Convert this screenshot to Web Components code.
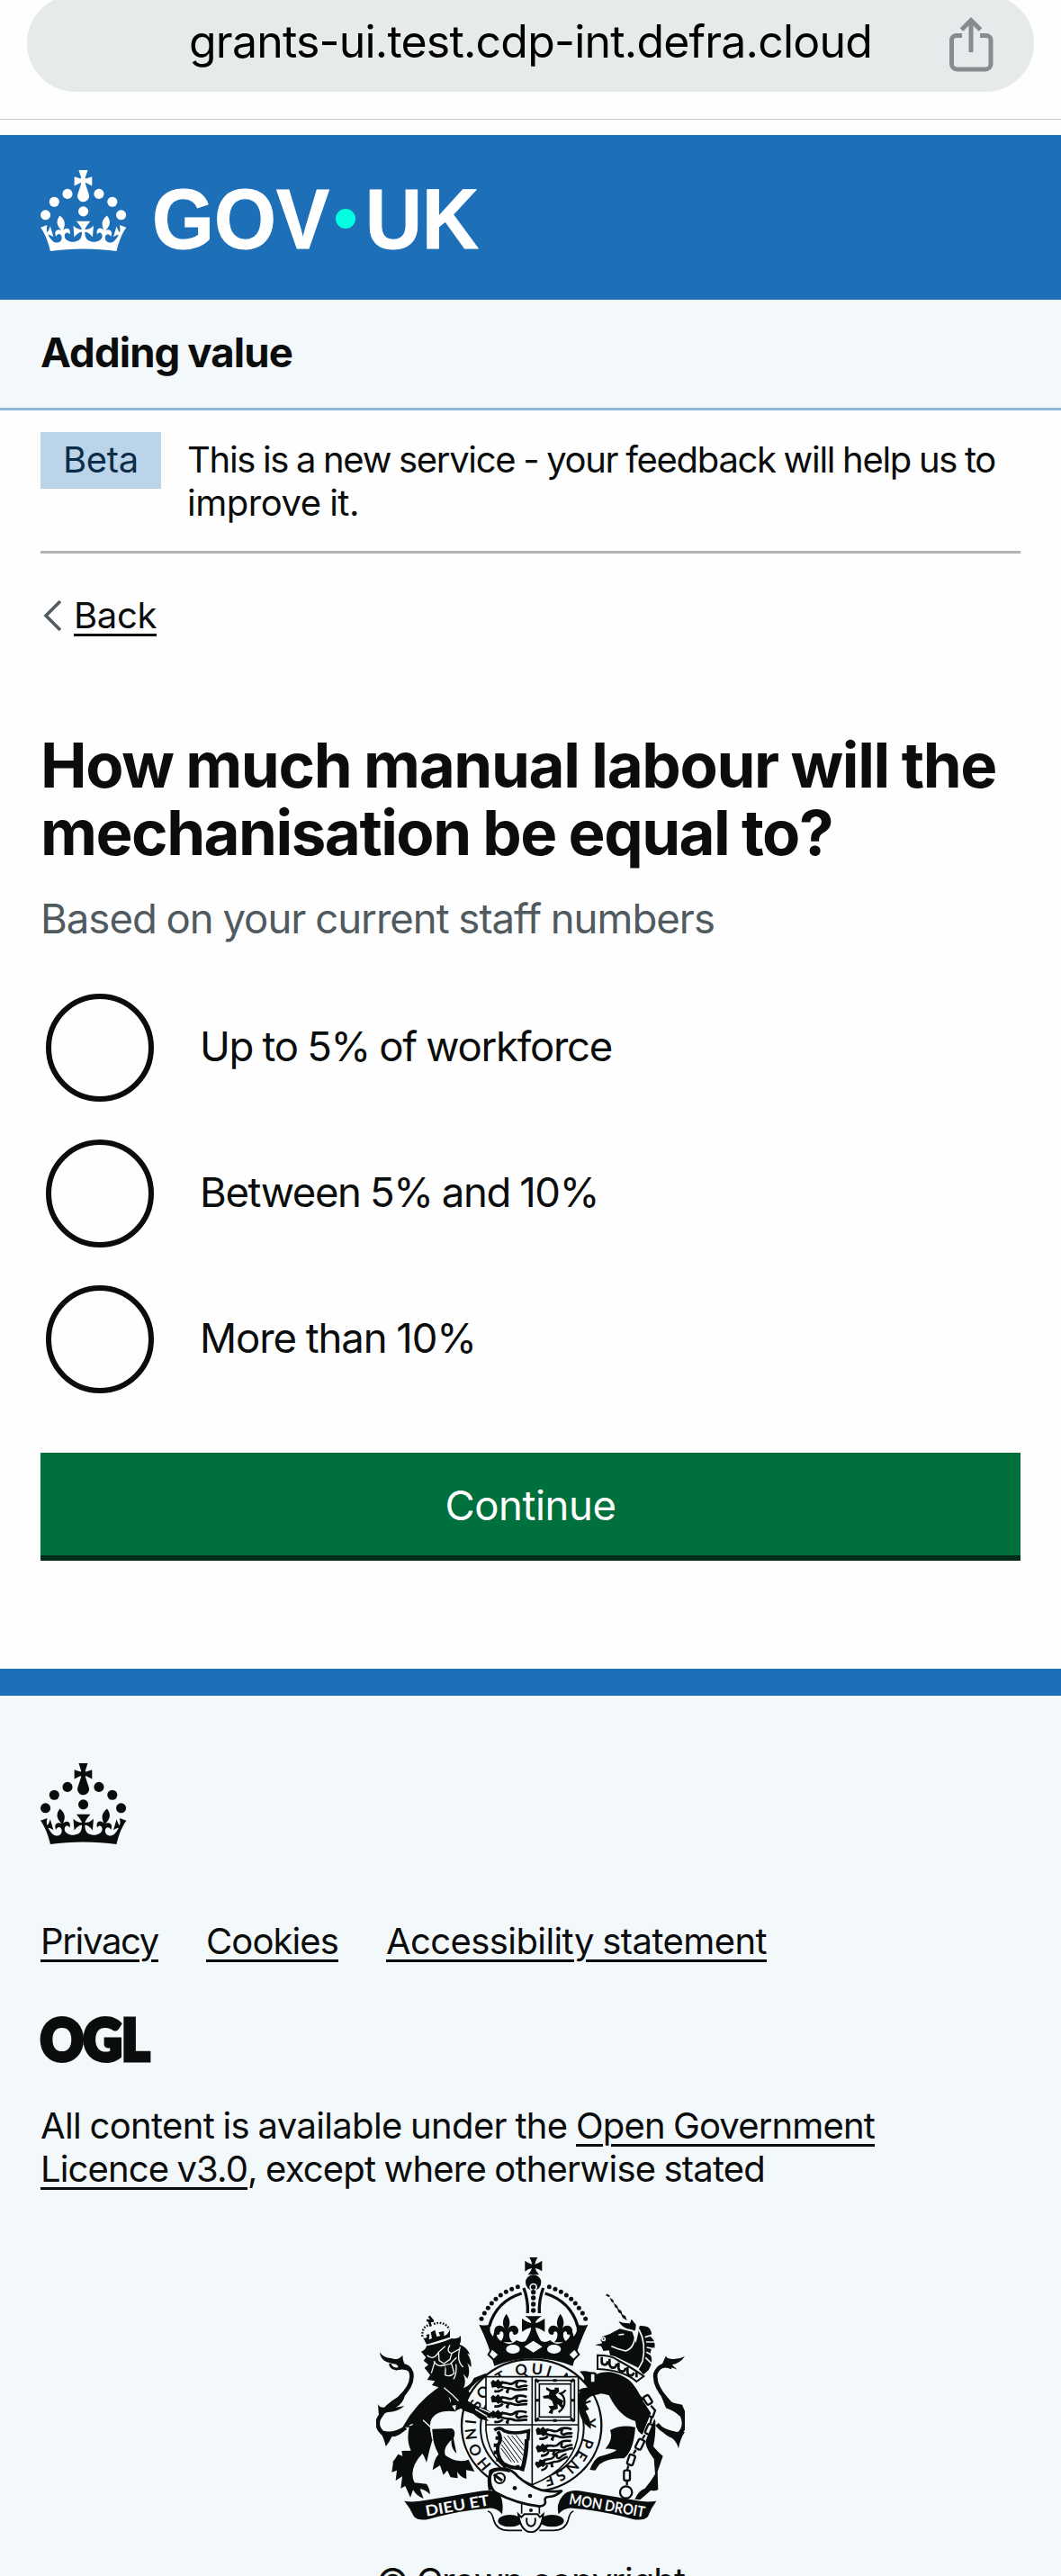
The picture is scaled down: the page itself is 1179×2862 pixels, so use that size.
<!DOCTYPE html>
<html lang="en">
<head>
<meta charset="utf-8">
<meta name="viewport" content="width=device-width, initial-scale=1">
<title>How much manual labour will the mechanisation be equal to?</title>
<style>
html,body{margin:0;padding:0;background:#fefefe}
body{height:2862px;overflow:hidden;font-family:Inter,"Liberation Sans",sans-serif;color:#0b0c0c;word-spacing:-.07em}
</style>
</head>
<body>
<grant-page></grant-page>

<template id="crown">
<svg viewBox="0 0 64 60" width="96" height="90" fill="currentColor"><circle cx="20" cy="17.6" r="3.7"/><circle cx="10.2" cy="23.5" r="3.7"/><circle cx="3.7" cy="33.2" r="3.7"/><circle cx="31.7" cy="30.6" r="3.7"/><circle cx="43.3" cy="17.6" r="3.7"/><circle cx="53.2" cy="23.5" r="3.7"/><circle cx="59.7" cy="33.2" r="3.7"/><path d="M33.1,9.8c.2-.1.3-.3.5-.5l4.6,2.4v-6.8l-4.6,1.5c-.1-.2-.3-.3-.5-.5l1.9-5.9h-6.7l1.9,5.9c-.2.1-.3.3-.5.5l-4.6-1.5v6.8l4.6-2.4c.1.2.3.3.5.5l-2.6,8c-.9,2.8,1.2,5.7,4.1,5.7h0c3,0,5.1-2.9,4.1-5.7l-2.6-8ZM37,37.9s-3.4,3.8-4.1,6.1c2.2,0,4.2-.5,6.4-2.8l-.7,8.5c-2-2.8-4.4-4.1-5.7-3.8.1,3.1.5,6.7,5.8,7.2,3.7.3,6.7-1.5,7-3.8.4-2.6-2-4.3-3.7-1.6-1.4-4.5,2.4-6.1,4.9-3.2-1.9-4.5-1.8-7.7,2.4-10.9,3,4,2.6,7.3-1.2,11.1,2.4-1.3,6.2,0,4,4.6-1.2-2.8-3.7-2.2-4.2.2-.3,1.7.7,3.7,3,4.2,1.9.3,4.7-.9,7-5.9-1.3,0-2.4.7-3.9,1.7l2.4-8c.6,2.3,1.4,3.7,2.2,4.5.6-1.6.5-2.8,0-5.3l5,1.8c-2.6,3.6-5.2,8.7-7.3,17.5-7.4-1.1-15.7-1.7-24.5-1.7h0c-8.8,0-17.1.6-24.5,1.7-2.1-8.9-4.7-13.9-7.3-17.5l5-1.8c-.5,2.5-.6,3.7,0,5.3.8-.8,1.6-2.3,2.2-4.5l2.4,8c-1.5-1-2.6-1.7-3.9-1.7,2.3,5,5.2,6.2,7,5.9,2.3-.4,3.3-2.4,3-4.2-.5-2.4-3-3.1-4.2-.2-2.2-4.6,1.6-6,4-4.6-3.7-3.7-4.2-7.1-1.2-11.1,4.2,3.2,4.3,6.4,2.4,10.9,2.5-2.8,6.3-1.3,4.9,3.2-1.8-2.7-4.1-1-3.7,1.6.3,2.3,3.3,4.1,7,3.8,5.4-.5,5.7-4.2,5.8-7.2-1.3-.2-3.7,1-5.7,3.8l-.7-8.5c2.2,2.3,4.2,2.7,6.4,2.8-.7-2.3-4.1-6.1-4.1-6.1h10.6,0Z"/></svg>
</template>

<template id="arms">
<svg viewBox="54 54 1029 918" width="343" height="306" fill="#0b0c0c" stroke="none">
<defs>
<path id="fleur" d="M0-45C-14-25-14-10-5 6C-12-8-34-12-40 8C-42 22-30 30-22 22C-24 14-14 10-10 20C-8 34-14 42-20 50H20C14 42 8 34 10 20C14 10 24 14 22 22C30 30 42 22 40 8C34-12 12-8 5 6C14-10 14-25 0-45Z"/>
<path id="pattee" d="M-28-30H28Q8-18 7-7Q18-9 38-22V22Q18 9 7 8Q8 25 30 60H-30Q-8 25-7 8Q-18 9-38 22V-22Q-18-9-7-7Q-8-18-28-30Z"/>
<g id="passant"><path d="M2-12L10-20 18-14 26-22 34-14 44-17 40-4 36 6 26 10 20 4 6 6Z"/><path d="M36-8C50-18 62 0 76-8C86-18 100-20 122-13M36 2C52 10 62 6 74 10C90 20 110 8 124 12M42 10C34 20 24 20 14 18M64 8C56 20 50 20 62 22M92-12C80 0 92 8 102 2C114 0 120-2 124 2" fill="none" stroke="#0b0c0c" stroke-width="8" stroke-linejoin="round"/></g>
<path id="garter" d="M440 745A181 174 0 0 1 444 494A181 174 0 0 1 700 494A181 174 0 0 1 610 784"/>
</defs>
<!-- royal crown -->
<path d="M565 54H592Q584 68 583 77Q593 75 607 65V100Q593 91 584 90Q586 100 597 112H560Q571 100 573 90Q563 91 550 101V65Q563 75 574 77Q573 68 565 54Z"/>
<circle cx="578" cy="138" r="26"/>
<circle cx="578" cy="153" r="13" fill="#f3f8fa"/>
<g id="beads"><circle cx="526" cy="152" r="7.5"/><circle cx="506" cy="160" r="7.5"/><circle cx="487" cy="169" r="7.5"/><circle cx="469" cy="180" r="7.5"/><circle cx="453" cy="193" r="7.5"/><circle cx="439" cy="207" r="7.5"/><circle cx="427" cy="223" r="7.5"/><circle cx="415" cy="240" r="7.5"/><circle cx="405" cy="259" r="7.5"/></g>
<use href="#beads" transform="translate(1157 0) scale(-1 1)"/>
<g fill="none" stroke="#0b0c0c" stroke-width="10"><path d="M539 174Q455 200 431 283M617 174Q702 200 726 283"/><path d="M546 156Q561 195 559 240M611 156Q596 195 598 240"/></g>
<circle cx="578" cy="153" r="8"/><circle cx="578" cy="170" r="8"/><circle cx="578" cy="189" r="8"/><circle cx="578" cy="210" r="8"/><circle cx="578" cy="231" r="8"/>
<use href="#pattee" x="578" y="280"/><use href="#fleur" x="488" y="287"/><use href="#fleur" x="668" y="287"/>
<path d="M397 278Q418 284 438 276Q426 300 444 318Q446 300 456 292Q450 328 478 336Q500 350 522 330Q545 344 562 326H594Q612 344 634 330Q656 350 678 336Q706 328 700 292Q710 300 712 318Q730 300 718 276Q738 284 760 278Q728 345 709 416Q578 366 448 416Q430 345 397 278Z"/>
<g fill="#f3f8fa"><ellipse cx="510" cy="360" rx="23" ry="15"/><ellipse cx="647" cy="360" rx="23" ry="15"/><path d="M578 332L608 352 578 371 548 352Z"/><path d="M440 358L464 378 446 396 428 378Z" stroke="#0b0c0c" stroke-width="6"/><path d="M716 358L730 378 712 396 694 378Z" stroke="#0b0c0c" stroke-width="6"/></g>

<!-- lion supporter -->
<path d="M204 368Q220 362 222 349Q270 340 306 324Q330 328 334 314Q340 330 332 344Q356 352 367 378L358 374Q374 400 370 420L358 406Q370 436 358 458L344 442Q356 468 345 490Q370 480 380 456Q400 448 420 440L418 452Q385 466 362 500Q400 548 437 560L438 602L412 598 408 588 394 596 386 580 368 584 366 570 344 572 340 556 318 566 320 546 300 550Q308 528 296 518Q304 550 320 568Q260 560 240 590Q226 610 242 660Q230 700 222 738Q214 715 208 708Q160 760 182 805L222 809Q234 826 233 844Q217 827 200 826L212 858Q190 851 177 829L168 854 151 816 136 824 141 784 119 798 123 764 106 770 112 729 107 741 127 710 142 716 139 699 170 698Q154 665 164 620L142 620Q186 540 262 487L240 480 250 466 224 462 234 446 215 422 228 412 212 398 220 388Z"/>
<path d="M241 626L305 624Q322 630 312 658L322 708Q302 690 305 662Q275 690 285 714Q325 742 362 728L382 768 354 763 355 792Q335 788 324 768L326 790 302 787 291 764 278 779 267 747 242 763Q248 724 262 710Q240 670 241 626Z"/>
<g fill="none" stroke="#0b0c0c"><path d="M152 622Q110 650 74 638Q46 610 70 580Q88 550 130 525Q180 480 171 438Q160 410 130 418" stroke-width="14"/><path d="M134 424Q104 430 100 408" stroke-width="8"/></g>
<path d="M66 370Q78 390 104 390Q126 400 142 380Q142 410 168 436Q142 420 114 434Q138 420 120 410Q68 405 66 370ZM60 543Q68 560 92 552Q124 545 151 510Q145 540 120 554L148 549Q125 570 92 570Q70 575 64 596ZM86 684Q80 655 68 638Q114 640 158 622Q132 652 106 652Q98 672 86 684Z"/>
<g fill="none" stroke="#f3f8fa" stroke-width="4"><path d="M224 380Q244 400 262 370L284 350M300 346Q286 370 306 374L330 360M262 370L264 398 280 408 300 394 306 374M246 400Q258 420 276 414L300 410 322 388M286 414L284 446Q300 454 314 440L304 404M334 352Q320 400 344 420M280 488Q316 516 340 546M366 555L414 584M388 548L428 568M210 596L236 620 242 660M165 615L176 610M250 400L238 440M320 410Q324 440 312 460"/></g>
<path d="M284 414L292 442 306 436 302 412Z"/>
<path d="M230 250L240 262 232 270 236 284M222 264L246 266" fill="none" stroke="#0b0c0c" stroke-width="8"/>
<path d="M208 318Q206 285 230 280M246 276Q282 264 298 294" fill="none" stroke="#0b0c0c" stroke-width="7" stroke-dasharray="5 5"/>
<path d="M210 320Q218 328 224 318L220 312 232 310 230 328 240 324 236 304 250 296 256 318 268 316 262 304 280 300 280 316Q292 314 300 294L300 320Q262 332 222 344Z"/>

<!-- unicorn supporter -->
<path d="M821 178L832 184" stroke="#0b0c0c" stroke-width="6"/><path d="M833 188l11 8 3 12-10-8zM846 206l12 9 4 13-12-8zM857 223l14 9 4 13-13-8zM869 241l16 9 5 14-14-8z"/>
<path d="M862 267Q878 275 900 274L905 260 920 278 918 300Q900 292 890 292Q872 284 862 267ZM932 282Q966 280 970 300Q976 314 968 318Q986 330 982 356Q970 350 968 378Q980 400 962 430L945 445 924 420 850 384 834 380 830 364 812 366 804 350 784 346 808 340 802 330 808 318 832 310 866 292 908 302 920 340Q928 308 932 282Z"/>
<g fill="none" stroke="#f3f8fa" stroke-width="5"><path d="M918 296Q920 354 886 366Q856 358 838 350M930 294Q955 340 942 400Q932 420 920 438M950 320l26-8M954 336l28 0M956 354l28 6M955 370l26 14M952 388l20 20"/><circle cx="812" cy="326" r="5"/><path d="M862 312l18-2"/></g>
<path d="M792 380Q840 380 858 396Q900 418 946 450L922 468Q880 430 792 426Z" fill="#f3f8fa" stroke="#0b0c0c" stroke-width="6"/>
<path d="M806 386v16q0 10 10 10t10-12M832 392v18q2 12 12 12t12-14M862 404v20q2 10 12 10t12-12M892 420v18q2 10 10 10t12-10M922 436v18" fill="none" stroke="#0b0c0c" stroke-width="8"/>
<path d="M732 434Q762 430 786 444Q830 424 882 453Q910 466 934 514L960 540 985 600Q986 650 978 684Q996 706 1010 716L992 768 994 828Q984 834 970 830L934 862 916 860Q930 830 950 824Q970 800 984 776L980 726Q946 684 952 650Q920 640 918 600Q865 586 830 514Q780 496 750 530L764 556 756 570Q778 600 770 626Q752 606 742 590Q724 570 730 520Q740 496 758 492L738 470Q760 462 732 434Z"/>
<path d="M834 630Q870 610 918 620Q912 700 880 724Q830 720 798 744L784 764 766 762Q780 726 798 718Q840 708 856 696Q836 690 818 692Q846 660 834 630Z"/>
<path d="M990 610Q1020 648 1064 642Q1090 620 1074 580Q1050 560 1020 525Q980 480 985 442Q1000 402 1040 420" fill="none" stroke="#0b0c0c" stroke-width="14"/>
<path d="M1020 382Q1010 405 998 430Q1022 410 1058 428L1040 412Q1066 408 1083 384Q1058 396 1036 392Q1022 392 1020 382ZM1004 516Q1030 540 1074 545L1083 566 1083 600Q1060 570 1020 556ZM994 612Q1040 640 1083 636Q1068 658 1062 690Q1052 658 1030 652Q1008 640 994 612Z"/>
<path d="M950 526L980 572 940 672 902 734 890 810" fill="none" stroke="#f3f8fa" stroke-width="18"/>
<g fill="none" stroke="#0b0c0c" stroke-width="7"><rect x="767" y="440" width="18" height="32" rx="5" fill="#f3f8fa"/><rect x="950" y="514" width="20" height="30" rx="6" transform="rotate(-32 960 530)"/><path d="M970 548l14 16-8 22-12-2"/><rect x="955" y="610" width="20" height="34" rx="6" transform="rotate(24 965 627)"/><rect x="923" y="660" width="20" height="34" rx="6" transform="rotate(26 933 677)"/><rect x="894" y="712" width="20" height="34" rx="6" transform="rotate(18 904 729)"/><rect x="880" y="764" width="20" height="34" rx="6"/><path d="M972 588l-4 18M950 646l-8 12M920 696l-8 12M895 748l-4 14M890 798v16"/><circle cx="887" cy="837" r="20"/></g>

<!-- garter and shield -->
<ellipse cx="572" cy="614" rx="233" ry="220" fill="#f3f8fa" stroke="#0b0c0c" stroke-width="7"/>
<ellipse cx="574" cy="622" rx="172" ry="168" fill="#f3f8fa" stroke="#0b0c0c" stroke-width="6"/>
<text font-family="Lato,sans-serif" font-size="50" font-weight="700" word-spacing="0"><textPath href="#garter" textLength="935">HONI SOIT QUI MAL Y PENSE</textPath></text>
<path d="M420 452H728V630Q724 750 574 812Q430 750 420 630Z" fill="#f3f8fa" stroke="#0b0c0c" stroke-width="5"/>
<path d="M574 452V812M420 612H728" stroke="#0b0c0c" stroke-width="5"/>
<use href="#passant" x="434" y="482"/><use href="#passant" x="434" y="532"/><use href="#passant" x="434" y="584"/>
<use href="#passant" x="584" y="640"/><use href="#passant" transform="translate(586 700) rotate(-10)"/><use href="#passant" transform="translate(586 754) rotate(-24) scale(.9)"/>
<g fill="none" stroke="#0b0c0c" stroke-width="5"><rect x="585" y="464" width="130" height="134"/><rect x="598" y="476" width="105" height="110"/></g>
<path d="M584 460l12 10M714 460l-12 10M584 600l12-10M714 600l-12-10M644 464h12M644 598h12M585 530h12M703 530h12" stroke="#0b0c0c" stroke-width="9"/>
<path d="M648 488l14 0 2 14-12 10 8 10 18 10-4 12 8 8-10 4-14-14 2 16-16 6-2 12-14-4 8-12-8-10 18-2-6-16-12-8-16 0-2-8 20-4 2-10-12-8 2-8 16 10 12-2z"/><path d="M662 570q20-14 20-34t-14-28q12-4 18-12" fill="none" stroke="#0b0c0c" stroke-width="7"/>
<g fill="none" stroke="#0b0c0c"><path d="M448 630Q466 616 480 632Q510 646 562 632L560 664" stroke-width="11"/><path d="M460 634Q476 660 460 680Q454 716 478 742Q510 760 544 756" stroke-width="12"/><path d="M556 660Q556 710 540 766" stroke-width="14"/><path d="M452 656h14M446 680h14M446 704h14M454 728h14M484 740v14M526 746v16" stroke-width="12"/><path d="M480 652L538 730M475 664L528 738M472 678L516 738M470 690L505 736M492 648L544 714M506 648L546 698M520 646L546 680" stroke-width="3"/></g>
<!-- paws over the shield -->
<path d="M340 516Q378 552 414 556L440 572 436 590 416 584 430 600 398 592 378 576 350 566 320 546Z"/><path d="M384 560l40 24M398 556l36 16" stroke="#f3f8fa" stroke-width="4"/>
<path d="M736 492Q756 484 780 490L800 510Q758 514 750 540L764 560 752 566Q772 600 770 626Q748 612 736 586Q724 560 730 510Z"/>
<!-- belt -->
<path d="M434 766Q446 756 484 758Q510 764 524 782Q560 815 606 830Q650 838 674 832Q652 852 630 852Q612 852 618 870Q618 882 598 884Q520 874 456 840Q428 824 434 766Z" fill="#f3f8fa" stroke="#0b0c0c" stroke-width="8"/>
<path d="M434 830Q424 776 446 764Q470 756 500 766" fill="none" stroke="#0b0c0c" stroke-width="11"/>
<circle cx="466" cy="790" r="17" fill="none" stroke="#0b0c0c" stroke-width="6"/><path d="M446 778l28 20" stroke="#0b0c0c" stroke-width="9"/><circle cx="516" cy="823" r="7"/><circle cx="567" cy="849" r="7"/>
<!-- motto scroll -->
<path d="M148 866Q180 872 230 862L396 834Q450 826 466 842Q480 870 474 910Q456 888 430 890Q340 896 230 926Q196 934 180 918Q168 890 148 866Z"/>
<path d="M988 866Q950 872 908 862L744 834Q704 826 682 842Q652 870 662 910Q680 888 708 890Q800 896 908 926Q944 934 960 918Q970 890 988 866Z"/>
<g fill="none" stroke="#0b0c0c" stroke-width="5"><path d="M426 900Q440 902 446 930Q456 966 500 964H540M712 900Q700 902 694 930Q684 966 640 964H598M539 874V908M598 884V908"/></g>
<ellipse cx="500" cy="932" rx="40" ry="20"/><ellipse cx="640" cy="932" rx="40" ry="20"/>
<path d="M528 910Q536 968 570 970Q604 968 611 910L600 920 592 910H548L538 920Z" fill="#f3f8fa" stroke="#0b0c0c" stroke-width="6"/><circle cx="570" cy="897" r="6"/><path d="M556 922Q552 948 570 950Q588 948 584 922" fill="none" stroke="#0b0c0c" stroke-width="6"/>
<g font-family="Lato,sans-serif" font-weight="700" font-size="50" fill="#f3f8fa"><text transform="translate(221 917) rotate(-10)" textLength="216" lengthAdjust="spacingAndGlyphs">DIEU ET</text><text transform="translate(695 876) rotate(10)" textLength="256" lengthAdjust="spacingAndGlyphs">MON DROIT</text></g>
</svg>
</template>

<script>
const define = (name, html, after) => customElements.define(name, class extends HTMLElement {
  constructor() {
    super();
    this.attachShadow({ mode: 'open' }).innerHTML = html;
  }
  connectedCallback() { if (after) after(this); }
});
const tpl = id => document.getElementById(id).innerHTML;

// A single line of text tracked to a given measure.
define('text-line', `<style>:host{display:inline-block;white-space:nowrap}</style><slot></slot>`, el => {
  el.style.letterSpacing = '0px';
  const natural = el.getBoundingClientRect().width;
  const n = el.textContent.length;
  el.style.letterSpacing = ((+el.getAttribute('measure') - natural) / n).toFixed(3) + 'px';
});

define('text-link', `<style>:host{display:inline-block;white-space:nowrap}a{color:inherit;text-decoration:underline;text-decoration-thickness:3px;text-underline-offset:6px}</style><a href="#"><slot></slot></a>`, el => {
  el.style.letterSpacing = '0px';
  const natural = el.getBoundingClientRect().width;
  el.style.letterSpacing = ((+el.getAttribute('measure') - natural) / el.textContent.length).toFixed(3) + 'px';
});

define('address-bar', `<style>
:host{display:block;height:132px;border-bottom:1px solid #c6c8ca;margin-bottom:17px;overflow:hidden}
.pill{box-sizing:border-box;height:108px;margin:-6px 30px 0;border-radius:54px;background:#e6eaeb;display:flex;align-items:center;justify-content:space-between;padding:0 45px 0 180px;color:#000;font-size:50px;line-height:60px}
svg{margin-top:3px}
text-line{margin-top:-5px}
</style><div class="pill"><text-line measure="759">grants-ui.test.cdp-int.defra.cloud</text-line>
<svg width="50" height="62" viewBox="0 0 50 62" fill="none" stroke="#868b90" stroke-width="5"><path d="M15 20.500H8.500a5 5 0 0 0-5 5V52a6 6 0 0 0 6 6H41a6 6 0 0 0 6-6V25.500a5 5 0 0 0-5-5H35"/><path d="M25 39V5M14.500 14L25 3.500 35.500 14"/></svg></div>`);

define('site-header', `<style>
:host{display:block;height:183px;background:#1d70b8;color:#fff}
div{display:flex;padding:39px 45px 0}
svg{overflow:visible}
</style><div>${tpl('crown')}<svg width="400" height="104" viewBox="0 0 400 104" fill="#fff" stroke="#fff" stroke-width="1" font-family="Liberation Sans,sans-serif" font-weight="700" font-size="94"><text x="28" y="87" textLength="197" lengthAdjust="spacingAndGlyphs">GOV</text><circle cx="243" cy="54" r="11" fill="#00ffe0" stroke="none"/><text x="265" y="87" textLength="126" lengthAdjust="spacingAndGlyphs">UK</text></svg></div>`);

define('service-name', `<style>
:host{display:block;box-sizing:border-box;height:123px;padding:29px 45px 0;background:#f3f8fa;border-bottom:3px solid #8eb8dc;font-size:45.500px;line-height:60px;font-weight:700}
</style><slot></slot>`);

define('phase-banner', `<style>
:host{display:flex;box-sizing:border-box;height:159px;margin:0 45px;padding-top:24px;border-bottom:3px solid #b1b4b6;font-size:40px;line-height:48px;gap:29px}
.tag{box-sizing:border-box;width:134px;height:63px;padding-top:7px;text-align:center;background:#bbd4ea;color:#0c2d4a}
p{margin:7px 0 0}
</style><div class="tag"><text-line measure="84">Beta</text-line></div><p><text-line measure="898">This is a new service - your feedback will help us to</text-line><br><text-line measure="191">improve it.</text-line></p>`);

define('back-link', `<style>
:host{display:flex;margin:45px 45px 0;font-size:40px;line-height:48px;gap:13px}
svg{margin-top:5px}
</style><svg width="24" height="38" viewBox="0 0 24 38" fill="none" stroke="#505a5f" stroke-width="3.500"><path d="M22 3L6 19 22 35"/></svg><text-link measure="92">Back</text-link>`);

define('page-question', `<style>
:host{display:block;margin:105px 45px 0}
h1{margin:0;font-size:69px;line-height:75px;font-weight:700}
p{margin:28px 0 0;font-size:45.500px;line-height:60px;color:#505a5f}
</style><h1><text-line measure="1062">How much manual labour will the</text-line><br><text-line measure="880">mechanisation be equal to?</text-line></h1><p><text-line measure="749">Based on your current staff numbers</text-line></p>`);

define('radio-option', `<style>
:host{display:flex;align-items:center;height:120px;gap:51px;font-size:45.500px;line-height:60px}
i{box-sizing:border-box;width:120px;height:120px;border:6px solid #0b0c0c;border-radius:50%}
slot{display:block;margin-top:-3px}
</style><i></i><slot></slot>`);

define('radio-group', `<style>:host{display:flex;flex-direction:column;gap:42px;margin:53px 45px 0 51px}</style><slot></slot>`);

define('submit-button', `<style>
:host{display:block;margin:66px 45px 0}
button{display:block;width:100%;height:120px;border:0;border-bottom:6px solid #002d18;background:#00703c;color:#fff;font:inherit;font-size:45.500px;line-height:60px;padding:3px 0 0}
</style><button><slot></slot></button>`);

define('site-footer', `<style>
:host{display:block;box-sizing:border-box;height:1008px;margin-top:120px;padding:75px 45px 0;border-top:30px solid #1d70b8;background:#f3f8fa;font-size:40px;line-height:48px}
.crown,.arms{display:flex}
.arms{justify-content:center;padding-top:74px}
nav{display:flex;gap:53px;padding-top:84px}
.ogl{display:block;margin:57px 0 44px;overflow:visible}
p{margin:0}
.copy{text-align:center;padding-top:30px}
</style><div class="crown">${tpl('crown')}</div>
<nav><text-link measure="131">Privacy</text-link><text-link measure="147">Cookies</text-link><text-link measure="423">Accessibility statement</text-link></nav>
<svg class="ogl" width="130" height="56" viewBox="0 0 130 56" fill="#0b0c0c" stroke="#0b0c0c" stroke-width="5" font-family="Lato,sans-serif" font-weight="900" font-size="62"><text x="0" y="51" textLength="121" lengthAdjust="spacingAndGlyphs">OGL</text></svg>
<p><text-line measure="595">All content is available under the&nbsp;</text-line><text-link measure="332">Open Government</text-link><br><text-link measure="230">Licence v3.0</text-link><text-line measure="575">, except where otherwise stated</text-line></p>
<div class="arms">${tpl('arms')}</div>
<p class="copy"><text-line measure="343">© Crown copyright</text-line></p>`);

define('grant-page', `<style>:host{display:flow-root;height:2862px;overflow:hidden}</style>
<address-bar></address-bar><site-header></site-header><service-name><text-line measure="280">Adding value</text-line></service-name>
<phase-banner></phase-banner><back-link></back-link><page-question></page-question>
<radio-group><radio-option><text-line measure="458">Up to 5% of workforce</text-line></radio-option><radio-option><text-line measure="443">Between 5% and 10%</text-line></radio-option><radio-option><text-line measure="307">More than 10%</text-line></radio-option></radio-group>
<submit-button><text-line measure="190">Continue</text-line></submit-button><site-footer></site-footer>`);
</script>
</body>
</html>
